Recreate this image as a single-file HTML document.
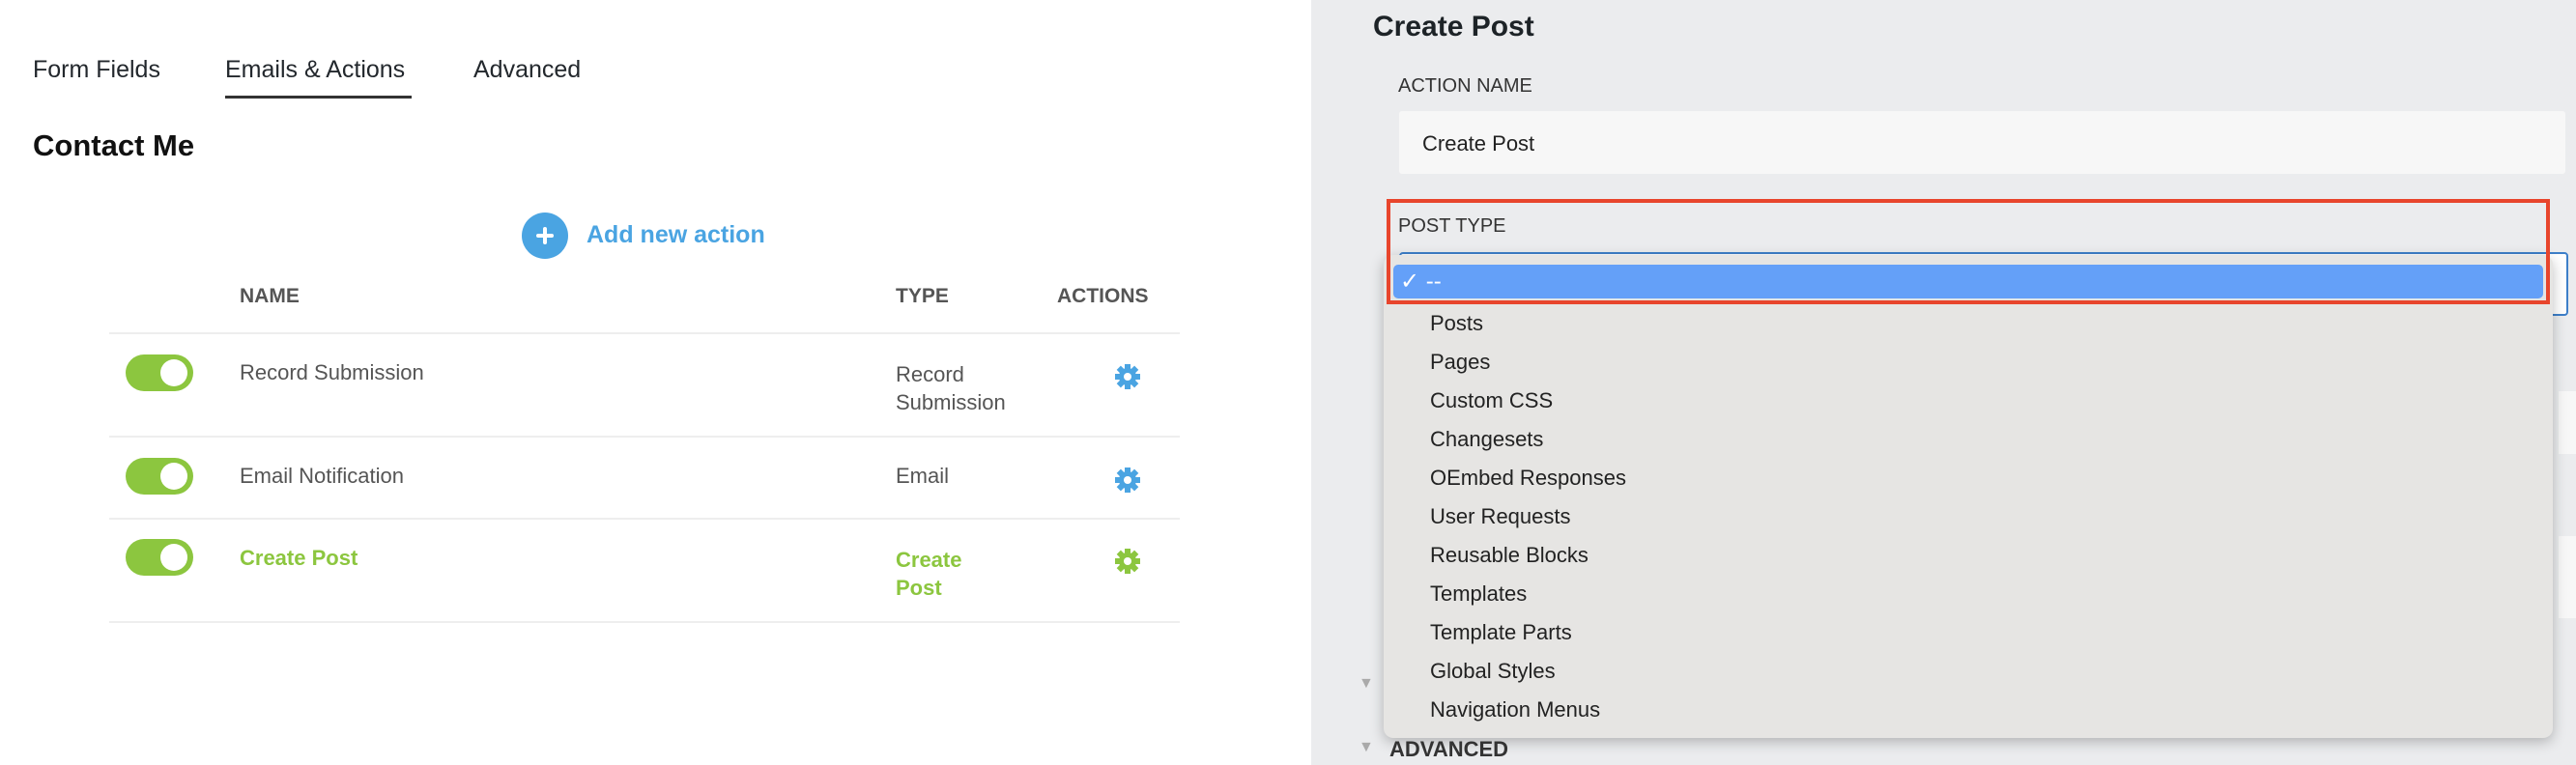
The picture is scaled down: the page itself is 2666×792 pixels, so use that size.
<!DOCTYPE html>
<html><head><meta charset="utf-8"><style>
*{margin:0;padding:0;box-sizing:border-box}
body{width:2666px;height:792px;overflow:hidden;background:#fff;font-family:"Liberation Sans",sans-serif;position:relative}
.a{position:absolute;white-space:nowrap}
.tab{font-size:25px;color:#23282d;top:58px}
.hd{font-size:21px;font-weight:bold;color:#555;top:295px}
.ln{position:absolute;left:113px;width:1108px;height:2px;background:#eee}
.tg{position:absolute;left:130px;width:70px;height:38px;border-radius:19px;background:#8cc63f}
.tg:after{content:"";position:absolute;right:6px;top:5px;width:28px;height:28px;border-radius:50%;background:#fff}
.tx{font-size:22px;color:#555}
.gr{color:#8cc63f;font-weight:bold}
.it{position:absolute;left:1480px;font-size:22px;color:#222}
</style></head><body>
<div class="a tab" style="left:34px">Form Fields</div>
<div class="a tab" style="left:233px">Emails &amp; Actions</div>
<div style="position:absolute;left:233px;top:99px;width:193px;height:3px;background:#333"></div>
<div class="a tab" style="left:490px">Advanced</div>
<div class="a" style="left:34px;top:133px;font-size:31px;font-weight:bold;color:#111">Contact Me</div>
<div style="position:absolute;left:540px;top:220px;width:48px;height:48px;border-radius:50%;background:#4aa4e2"></div>
<div style="position:absolute;left:562px;top:235px;width:4px;height:18px;background:#fff;border-radius:2px"></div>
<div style="position:absolute;left:555px;top:242px;width:18px;height:4px;background:#fff;border-radius:2px"></div>
<div class="a" style="left:607px;top:229px;font-size:25px;color:#4aa4e2;font-weight:bold">Add new action</div>
<div class="a hd" style="left:248px">NAME</div>
<div class="a hd" style="left:927px">TYPE</div>
<div class="a hd" style="left:1094px">ACTIONS</div>
<div class="ln" style="top:344px"></div><div class="ln" style="top:451px"></div><div class="ln" style="top:536px"></div><div class="ln" style="top:643px"></div>
<div class="tg" style="top:367px"></div><div class="tg" style="top:474px"></div><div class="tg" style="top:558px"></div>
<div class="a tx" style="left:248px;top:373px">Record Submission</div>
<div class="a tx" style="left:927px;top:373px;line-height:29px">Record<br>Submission</div>
<div class="a tx" style="left:248px;top:480px">Email Notification</div>
<div class="a tx" style="left:927px;top:480px">Email</div>
<div class="a tx gr" style="left:248px;top:565px">Create Post</div>
<div class="a tx gr" style="left:927px;top:565px;line-height:29px">Create<br>Post</div>
<svg class="a" style="left:1154px;top:377px" width="26" height="26" viewBox="0 0 26 26"><g fill="#4aa4e2"><circle cx="13" cy="13" r="9"/><rect x="10" y="0" width="6" height="26"/><rect x="0" y="10" width="26" height="6"/><rect x="10" y="0" width="6" height="26" transform="rotate(45 13 13)"/><rect x="10" y="0" width="6" height="26" transform="rotate(-45 13 13)"/></g><circle cx="13" cy="13" r="4" fill="#fff"/></svg>
<svg class="a" style="left:1154px;top:484px" width="26" height="26" viewBox="0 0 26 26"><g fill="#4aa4e2"><circle cx="13" cy="13" r="9"/><rect x="10" y="0" width="6" height="26"/><rect x="0" y="10" width="26" height="6"/><rect x="10" y="0" width="6" height="26" transform="rotate(45 13 13)"/><rect x="10" y="0" width="6" height="26" transform="rotate(-45 13 13)"/></g><circle cx="13" cy="13" r="4" fill="#fff"/></svg>
<svg class="a" style="left:1154px;top:568px" width="26" height="26" viewBox="0 0 26 26"><g fill="#8cc63f"><circle cx="13" cy="13" r="9"/><rect x="10" y="0" width="6" height="26"/><rect x="0" y="10" width="26" height="6"/><rect x="10" y="0" width="6" height="26" transform="rotate(45 13 13)"/><rect x="10" y="0" width="6" height="26" transform="rotate(-45 13 13)"/></g><circle cx="13" cy="13" r="4" fill="#fff"/></svg>

<div style="position:absolute;left:1357px;top:0;width:1309px;height:792px;background:#ebecee"></div>
<div class="a" style="left:1421px;top:11px;font-size:30px;font-weight:bold;color:#1d2327">Create Post</div>
<div class="a" style="left:1447px;top:78px;font-size:20px;color:#333">ACTION NAME</div>
<div style="position:absolute;left:1448px;top:115px;width:1207px;height:65px;background:#f7f7f7;border-radius:3px"></div>
<div class="a" style="left:1472px;top:136px;font-size:22px;color:#222">Create Post</div>
<div class="a" style="left:1447px;top:223px;font-size:20px;color:#333">POST TYPE</div>
<div style="position:absolute;left:1448px;top:261px;width:1210px;height:66px;border:2px solid #3d7fc9;border-radius:4px;background:#fff"></div>
<div style="position:absolute;left:2648px;top:405px;width:18px;height:65px;background:#f7f7f7"></div>
<div style="position:absolute;left:2648px;top:555px;width:18px;height:85px;background:#f7f7f7"></div>
<div style="position:absolute;left:1432px;top:264px;width:1210px;height:500px;background:#e6e5e3;border-radius:10px;box-shadow:0 4px 14px rgba(0,0,0,.25)"></div>
<div style="position:absolute;left:1442px;top:274px;width:1190px;height:35px;background:#64a0f8;border-radius:5px"></div>
<div class="a" style="left:1449px;top:277px;font-size:24px;color:#fff">✓ --</div>
<div class="it" style="top:322px">Posts</div>
<div class="it" style="top:362px">Pages</div>
<div class="it" style="top:402px">Custom CSS</div>
<div class="it" style="top:442px">Changesets</div>
<div class="it" style="top:482px">OEmbed Responses</div>
<div class="it" style="top:522px">User Requests</div>
<div class="it" style="top:562px">Reusable Blocks</div>
<div class="it" style="top:602px">Templates</div>
<div class="it" style="top:642px">Template Parts</div>
<div class="it" style="top:682px">Global Styles</div>
<div class="it" style="top:722px">Navigation Menus</div>
<div style="position:absolute;left:1435px;top:206px;width:1204px;height:109px;border:4px solid #e8452c"></div>
<div class="a" style="left:1406px;top:699px;font-size:16px;color:#aaa">▼</div>
<div class="a" style="left:1406px;top:765px;font-size:16px;color:#aaa">▼</div>
<div class="a" style="left:1438px;top:763px;font-size:22px;font-weight:bold;color:#333">ADVANCED</div>
</body></html>
